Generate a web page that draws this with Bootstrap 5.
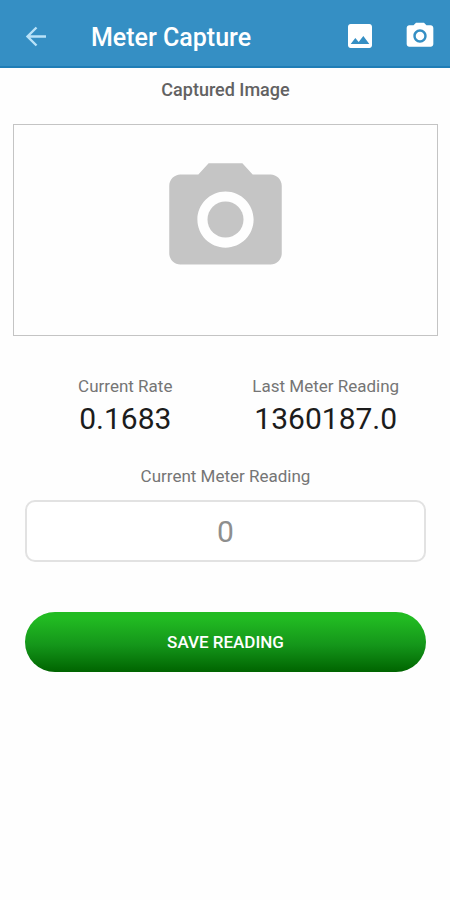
<!DOCTYPE html>
<html lang="en">
<head>
<meta charset="utf-8">
<meta name="viewport" content="width=device-width, initial-scale=1">
<title>Meter Capture</title>
<link href="https://cdn.jsdelivr.net/npm/bootstrap@5.3.0/dist/css/bootstrap.min.css" rel="stylesheet">
<style>
  body { font-family: Roboto, "Liberation Sans", sans-serif; background: #fefefe; color: #1c1c1c; }
  .app-bar { background: #358fc4; border-bottom: 2px solid #1f7db6; height: 68px; padding: 6px 14px 0 20px; }
  .app-title { font-size: 25px; line-height: 32px; font-weight: 500; margin-left: 39px; }
  .icon-btn { line-height: 0; }
  .capture-page { padding: 10px 12px 24px 13px; }
  .caption { font-size: 17px; line-height: 24px; color: #757575; }
  .caption-strong { font-size: 18px; font-weight: 500; color: #626262; margin-bottom: 22px; }
  .preview { border: 1px solid #c4c4c4; height: 212px; padding-top: 27px; }
  .reading-form { padding: 38px 12px 0; }
  .reading-value { font-size: 30px; line-height: 42px; }
  .reading-input { height: 62px; border: 2px solid #e2e2e2; border-radius: 10px; font-size: 30px; margin: 12px 0 50px; }
  .reading-input::placeholder { color: #8e8e8e; }
  .save-btn { height: 60px; font-size: 17px; font-weight: 500; color: #fff; background: linear-gradient(#22bb22 10%, #14961a 55%, #006400); }
  .save-btn:hover { color: #fff; }
</style>
</head>
<body>
<header class="app-bar d-flex align-items-center text-white">
  <button type="button" class="icon-btn btn p-0 border-0" aria-label="Back">
    <svg width="32" height="32" viewBox="0 0 32 32" fill="none" stroke="#b9e2f8" stroke-width="2.400"><path d="M26 16.500H8M16.500 7.500L7.500 16.500L16.500 25.500"/></svg>
  </button>
  <h1 class="app-title mb-0 me-auto pt-1">Meter Capture</h1>
  <div class="d-flex gap-4">
    <button type="button" class="icon-btn btn p-0 border-0 me-1" aria-label="Choose image">
      <svg width="32" height="32" viewBox="0 0 24 24" fill="#fff"><path d="M21 19V5c0-1.100-.9-2-2-2H5c-1.100 0-2 .9-2 2v14c0 1.100.9 2 2 2h14c1.100 0 2-.9 2-2zM8.500 13.500l2.500 3.010L14.500 12l4.500 6H5l3.500-4.500z"/></svg>
    </button>
    <button type="button" class="icon-btn btn p-0 border-0" aria-label="Take photo">
      <svg width="32" height="32" viewBox="0 0 24 24" fill="#fff"><circle cx="12" cy="12" r="3.200"/><path d="M9 2L7.170 4H4c-1.100 0-2 .9-2 2v12c0 1.100.9 2 2 2h16c1.100 0 2-.9 2-2V6c0-1.100-.9-2-2-2h-3.170L15 2H9zm3 15c-2.760 0-5-2.240-5-5s2.240-5 5-5 5 2.240 5 5-2.240 5-5 5z"/></svg>
    </button>
  </div>
</header>
<main class="capture-page text-center">
  <section>
    <h2 class="caption caption-strong">Captured Image</h2>
    <div class="preview">
      <svg width="135" height="135" viewBox="0 0 24 24" fill="#c5c5c5" role="img" aria-label="No image captured"><circle cx="12" cy="12" r="3.200"/><path d="M9 2L7.170 4H4c-1.100 0-2 .9-2 2v12c0 1.100.9 2 2 2h16c1.100 0 2-.9 2-2V6c0-1.100-.9-2-2-2h-3.170L15 2H9zm3 15c-2.760 0-5-2.240-5-5s2.240-5 5-5 5 2.240 5 5-2.240 5-5 5z"/></svg>
    </div>
  </section>
  <form class="reading-form" onsubmit="return false">
    <dl class="row g-0 mb-4">
      <div class="col-6"><dt class="caption fw-normal">Current Rate</dt><dd class="reading-value mb-0">0.1683</dd></div>
      <div class="col-6"><dt class="caption fw-normal">Last Meter Reading</dt><dd class="reading-value mb-0">1360187.0</dd></div>
    </dl>
    <label class="caption d-block" for="reading">Current Meter Reading</label>
    <input class="reading-input form-control text-center" id="reading" type="text" inputmode="decimal" placeholder="0">
    <button type="submit" class="save-btn btn w-100 rounded-pill border-0 pt-2">SAVE READING</button>
  </form>
</main>
<script src="https://cdn.jsdelivr.net/npm/bootstrap@5.3.0/dist/js/bootstrap.bundle.min.js"></script>
</body>
</html>
